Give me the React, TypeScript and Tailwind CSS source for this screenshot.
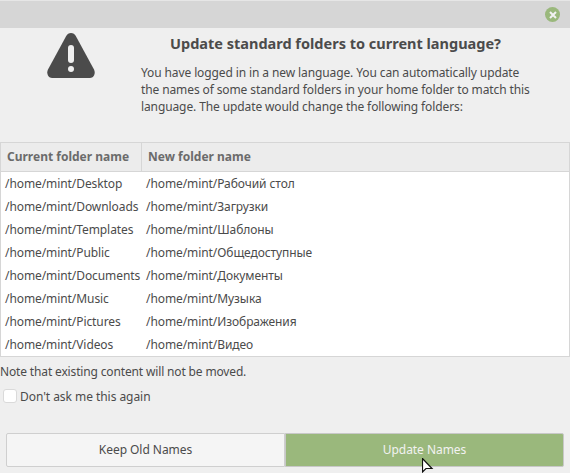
const rows = [
  ["/home/mint/Desktop", "/home/mint/Рабочий стол"],
  ["/home/mint/Downloads", "/home/mint/Загрузки"],
  ["/home/mint/Templates", "/home/mint/Шаблоны"],
  ["/home/mint/Public", "/home/mint/Общедоступные"],
  ["/home/mint/Documents", "/home/mint/Документы"],
  ["/home/mint/Music", "/home/mint/Музыка"],
  ["/home/mint/Pictures", "/home/mint/Изображения"],
  ["/home/mint/Videos", "/home/mint/Видео"],
];

export default function App() {
  return (
    <div className="relative w-[570px] h-[473px] overflow-hidden flex flex-col bg-[#efefef] text-[#4b4b4b] text-[12px] font-['Noto_Sans',sans-serif]">
      <div className="h-[28px] shrink-0 bg-[#d6d6d6] border-t border-[#e6e6e6] flex items-center justify-end pr-[10px]">
        <div className="w-[15px] h-[15px] rounded-full bg-[#9ab87c] flex items-center justify-center">
          <svg width="8" height="8" viewBox="0 0 8 8">
            <path d="M1 1L7 7M7 1L1 7" stroke="#f2f2f2" strokeWidth="2" />
          </svg>
        </div>
      </div>
      <div className="flex h-[114px] shrink-0">
        <div className="w-[141px] shrink-0 pl-[47px] pt-[5px]">
          <svg width="48" height="46" viewBox="0 0 48 46">
            <path
              d="M24 0c-2.200 0-3.700 1.100-4.800 3L1 36.500C-.800 40 .900 45 5 45h38c4.100 0 5.800-5 4-8.500L28.800 3C27.700 1.100 26.200 0 24 0z"
              fill="#4b4b4b"
            />
            <rect x="21" y="12" width="6" height="18" rx="3" fill="#efefef" />
            <circle cx="24" cy="36" r="3" fill="#efefef" />
          </svg>
        </div>
        <div className="flex-1 min-w-0">
          <div className="pt-[6px] pl-[29px] h-[30px] text-[14.5px] leading-[18px] font-bold whitespace-nowrap">
            Update standard folders to current language?
          </div>
          <p className="mt-[6px] leading-[17px] whitespace-nowrap tracking-[-0.11px]">
            You have logged in in a new language. You can automatically update
            <br />
            the names of some standard folders in your home folder to match this
            <br />
            language. The update would change the following folders:
          </p>
        </div>
      </div>
      <div className="h-[215px] shrink-0 border border-[#d6d6d6] bg-white">
        <div className="h-[29px] flex bg-[#ececec] border-b border-[#d6d6d6] font-bold text-[#6b6b6b] leading-[27px]">
          <div className="w-[141px] shrink-0 border-r border-[#d6d6d6] pl-[6px]">Current folder name</div>
          <div className="pl-[6px]">New folder name</div>
        </div>
        {rows.map(([a, b]) => (
          <div key={a} className="h-[23px] flex leading-[23px] tracking-[-0.08px]">
            <div className="w-[141px] shrink-0 pl-[4px] whitespace-nowrap">{a}</div>
            <div className="pl-[4px]">{b}</div>
          </div>
        ))}
      </div>
      <div className="h-[28px] shrink-0 leading-[29px] tracking-[-0.15px]">Note that existing content will not be moved.</div>
      <label className="h-[24px] shrink-0 flex items-center pl-[3px] gap-[3px]">
        <span className="w-[14px] h-[14px] mb-[2px] rounded-[3px] border border-[#dadada] bg-white" />
        <span className="tracking-[-0.05px]">Don't ask me this again</span>
      </label>
      <div className="flex pl-[6px] pr-[6px] mt-[24px] tracking-[-0.05px]">
        <div className="w-[279px] h-[34px] flex items-center justify-center rounded-l-[2px] border border-[#cfcfcf] bg-[#f5f5f5]">
          Keep Old Names
        </div>
        <div className="flex-1 h-[34px] flex items-center justify-center rounded-r-[2px] border border-[#c8c8c8] bg-[#9ab87c] text-[#f2f2f2]">
          Update Names
        </div>
      </div>
      <svg className="absolute left-[422px] top-[458px]" width="12" height="15" viewBox="0 0 12 15">
        <path d="M0.500 0.500V14L4 10.500H10z" fill="#fff" stroke="#111" strokeWidth="1.200" />
      </svg>
    </div>
  );
}
